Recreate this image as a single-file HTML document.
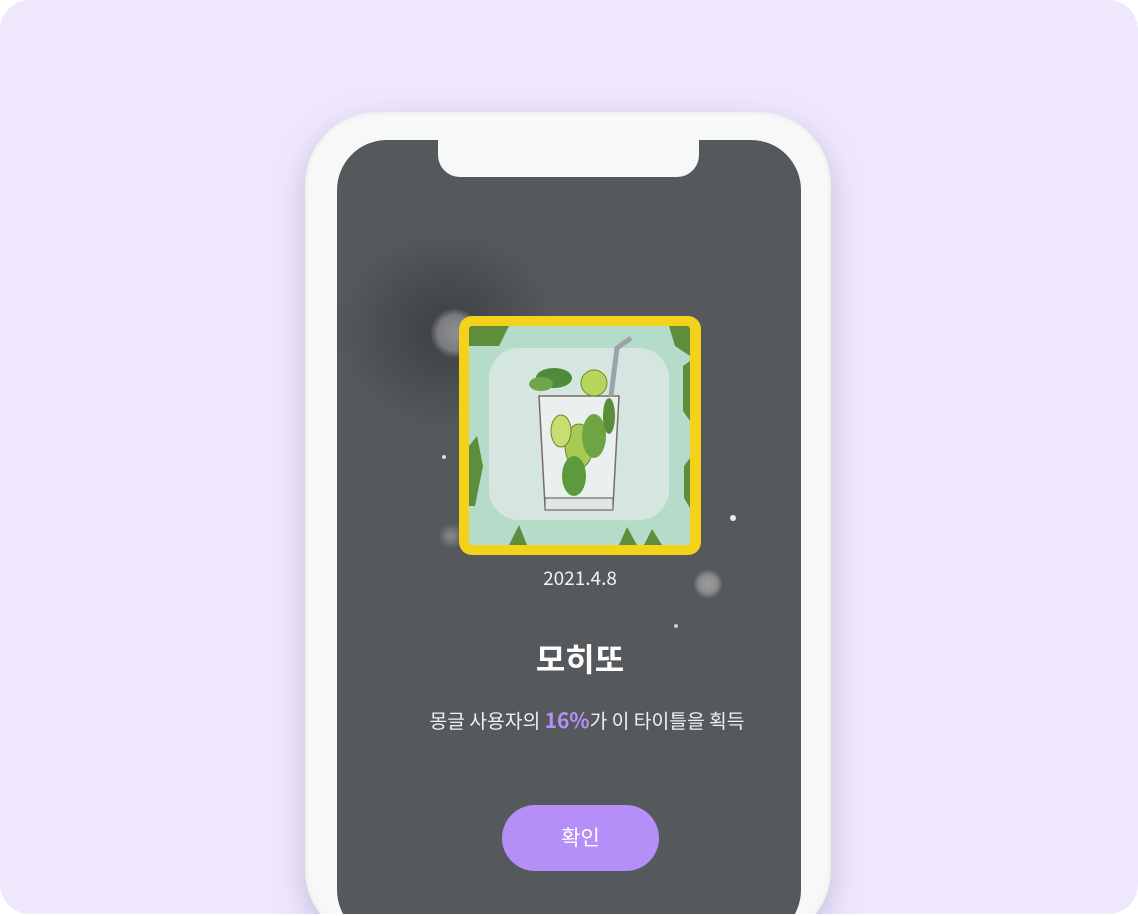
<!DOCTYPE html>
<html><head><meta charset="utf-8"><style>
*{margin:0;padding:0;box-sizing:border-box}
html,body{width:1138px;height:916px;overflow:hidden}
body{background:#fff;position:relative;font-family:"Noto Sans CJK KR","Liberation Sans",sans-serif}
.bg{position:absolute;left:0;top:0;width:1138px;height:914px;background:#efe8fd;border-radius:30px;overflow:hidden}
.phone{position:absolute;left:305px;top:112px;width:526px;height:830px;background:#f7f8f8;border-radius:72px;box-shadow:0 10px 30px rgba(120,100,160,.35), inset 0 0 6px rgba(0,0,0,.08)}
.screen{position:absolute;left:337px;top:140px;width:464px;height:800px;border-radius:50px;background:#56595c;overflow:hidden}
.notch{position:absolute;left:101px;top:0;width:261px;height:37px;background:#f7f8f8;border-radius:0 0 22px 22px}
.glow{position:absolute;border-radius:50%}
.t{position:absolute;left:11px;width:464px;text-align:center;color:#fff;white-space:nowrap}
</style></head><body>
<div class="bg">
<div class="phone"></div>
<div class="screen">
 <div class="glow" style="left:0;top:90px;width:220px;height:200px;background:radial-gradient(closest-side,#3d4043,rgba(86,89,92,0));"></div>
 <div class="glow" style="left:93px;top:168px;width:50px;height:50px;background:radial-gradient(closest-side,#8e8f91,#7a7c7e 70%,rgba(86,89,92,0));"></div>
 <div class="glow" style="left:101px;top:383px;width:26px;height:26px;background:radial-gradient(closest-side,#8a8c8e,rgba(86,89,92,0));"></div>
 <div class="glow" style="left:356px;top:429px;width:30px;height:30px;background:radial-gradient(closest-side,#9a9c9e,#8a8c8e 60%,rgba(86,89,92,0));"></div>
 <div class="glow" style="left:105px;top:315px;width:4px;height:4px;background:#ddd"></div>
 <div class="glow" style="left:393px;top:375px;width:6px;height:6px;background:#eee"></div>
 <div class="glow" style="left:337px;top:484px;width:4px;height:4px;background:#ccc"></div>
 <div class="notch"></div>
 <div style="position:absolute;left:122px;top:176px;width:242px;height:239px;background:#f5d21a;border-radius:13px;padding:10px">
  <svg width="221" height="219" viewBox="0 0 221 219" style="display:block;border-radius:3px">
   <rect width="221" height="219" fill="#b5dcc8"/>
   <rect x="20" y="22" width="180" height="172" rx="30" fill="#d5e6e1"/>
   <path d="M0 0h40l-10 20H0zM200 0h21v30l-15-10zM0 120l8-10 6 30-8 40H0zM214 40l7-5v60l-7-10zM215 140l6-8v50l-6-10zM40 219l10-20 8 20zM150 219l8-18 10 18zM175 219l8-16 10 16z" fill="#5e8d3c"/>
   <path d="M70 70h80l-6 110H76z" fill="#e9f0ee" stroke="#7a6a66" stroke-width="1.5"/>
   <path d="M76 172h68v12H76z" fill="#dfe8e6" stroke="#7a6a66" stroke-width="1.2"/>
   <path d="M142 70l6-48 14-10" stroke="#9aa3a7" stroke-width="5" fill="none"/>
   <ellipse cx="85" cy="52" rx="18" ry="10" fill="#4f8c3a"/>
   <ellipse cx="72" cy="58" rx="12" ry="7" fill="#6fa54b"/>
   <circle cx="125" cy="57" r="13" fill="#b9d45b" stroke="#6b8a2a"/>
   <ellipse cx="110" cy="120" rx="14" ry="22" fill="#a8c954" stroke="#6b8a2a"/>
   <ellipse cx="125" cy="110" rx="12" ry="22" fill="#6ea444"/>
   <ellipse cx="105" cy="150" rx="12" ry="20" fill="#5d9a3e"/>
   <ellipse cx="140" cy="90" rx="6" ry="18" fill="#5a8f38"/>
   <ellipse cx="92" cy="105" rx="10" ry="16" fill="#c8de72" stroke="#6b8a2a"/>
  </svg>
 </div>
 <div class="t" style="top:424px;font-size:19px;line-height:28px;color:#f2f2f2">2021.4.8</div>
 <div class="t" style="top:496px;font-size:32px;font-weight:bold;line-height:44px">모히또</div>
 <div class="t" style="left:18px;top:565px;font-size:19.3px;line-height:30px;color:#f0f0f0">몽글 사용자의 <b style="color:#b58ef8;font-size:21px">16%</b>가 이 타이틀을 획득</div>
 <div style="position:absolute;left:165px;top:665px;width:157px;height:66px;border-radius:33px;background:#b58ef8;color:#fff;font-size:21px;text-align:center;line-height:64px">확인</div>
</div>
</div>
</body></html>
